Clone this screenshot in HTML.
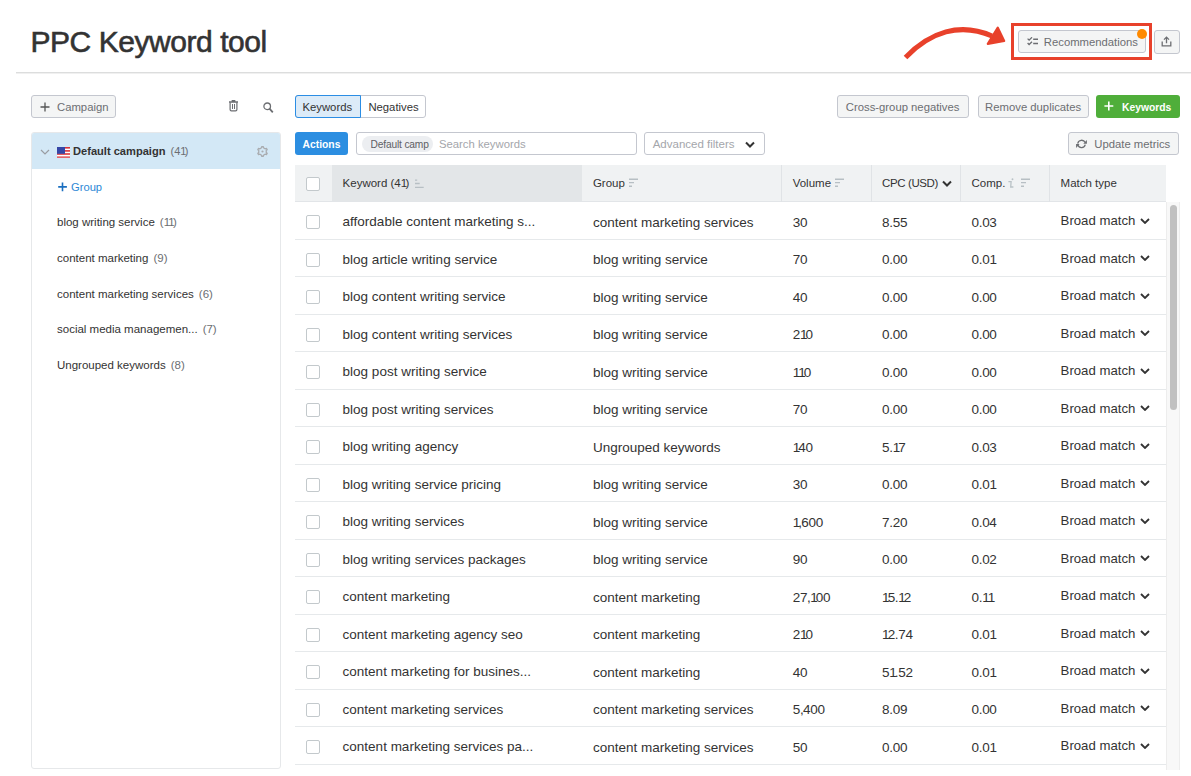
<!DOCTYPE html>
<html><head><meta charset="utf-8">
<style>
*{box-sizing:border-box;margin:0;padding:0}
html,body{width:1191px;height:776px;overflow:hidden;background:#fff}
body{position:relative;font-family:"Liberation Sans",sans-serif;color:#333}
.a{position:absolute}
.title{left:30.5px;top:24.7px;font-size:30px;line-height:34px;letter-spacing:-0.45px;-webkit-text-stroke:0.6px #333;color:#333;white-space:nowrap}
.hr{left:16px;top:72px;width:1175px;height:2px;border-top:1px solid #dcdddd;background:#f0f0f0}
.btn{position:absolute;border:1px solid #c4c7cf;border-radius:3px;background:#f4f5f5;color:#6c6e72;font-size:11.3px;display:flex;align-items:center;white-space:nowrap;padding-top:2px}
.panel{left:31px;top:132px;width:250px;height:637px;border:1px solid #e6e8ea;border-radius:3px;overflow:hidden}
.phead{position:absolute;left:0;top:0;width:100%;height:36px;background:#d3e8f6}
.gi{position:absolute;left:25px;font-size:11.5px;color:#333;white-space:nowrap;line-height:14px}
.gi span{color:#6c6e72;margin-left:5px}
.seg{left:295px;top:95px;width:131px;height:23px;border:1px solid #c4c7cf;border-radius:3px;font-size:11.3px;color:#333}
.seg .k{position:absolute;left:-1px;top:-1px;width:66px;height:23px;border:1px solid #2b8de4;border-radius:3px 0 0 3px;background:#dcebf8;display:flex;align-items:center;padding-left:6.5px}
.seg .n{position:absolute;left:65px;top:0;width:65px;height:21px;display:flex;align-items:center;justify-content:center}
.actions{left:295px;top:132.3px;width:53px;height:23px;background:#2c8ee1;border-radius:3px;color:#fff;font-weight:bold;font-size:10.3px;display:flex;align-items:center;justify-content:center;padding-top:2px}
.search{left:356px;top:132.3px;width:281px;height:23px;border:1px solid #c4c7cf;border-radius:3px;background:#fff}
.chip{position:absolute;left:5px;top:3px;width:71px;height:16px;border-radius:8px;background:#eceef1;font-size:10.2px;letter-spacing:-0.15px;color:#5e6064;line-height:17px;padding-left:8.5px;overflow:hidden;white-space:nowrap}
.chip span{display:inline-block;width:58px;overflow:hidden;vertical-align:top}
.ph{position:absolute;left:82px;top:1px;height:21px;line-height:21px;font-size:11.3px;color:#a4a6ab;white-space:nowrap}
.adv{left:644.4px;top:132.3px;width:120.5px;height:23px;border:1px solid #c4c7cf;border-radius:3px;background:#fff;font-size:11.5px;color:#a4a6ab}
.green{left:1096px;top:94.8px;width:83.5px;height:22.9px;background:#4fae3a;border-radius:3px;color:#fff;font-weight:bold;font-size:10.3px}
.tbl{left:295px;top:164.5px;width:871px;height:605px;overflow:hidden}
.thead{position:absolute;left:0;top:0;width:871px;height:37px}
.hbg{position:absolute;top:0;height:37px;background:#f0f2f3;border-bottom:1px solid #e2e5e8}
.hbg2{position:absolute;top:0;height:37px;background:#e3e6e8;border-bottom:1px solid #e2e5e8}
.vd{position:absolute;top:0;width:1px;height:37px;background:#e0e3e6}
.thead .c{font-size:11.5px;height:37px;color:#333;padding-top:0}
.c{position:absolute;top:0;height:37.5px;display:flex;align-items:center;padding-left:11px;padding-top:2px;white-space:nowrap;overflow:hidden}
.row{position:absolute;left:0;width:871px;height:37.5px;border-bottom:1px solid #e6e9eb;font-size:13.5px;color:#333}
.rows{position:absolute;left:0;top:37.5px;width:871px}
.n1{font-style:normal;margin-right:-1.7px}
.cm{font-style:normal;margin-right:-0.4px}
.cb{display:inline-block;width:14px;height:14px;border:1px solid #c3c9cc;border-radius:2px;background:#fff}
.si{margin-left:4px}
.hc{margin-left:4px}
.ii{font-family:"Liberation Serif",serif;font-style:italic;color:#b9bcc2;font-size:13px;margin-left:1px;margin-right:-1px}
.bm{display:flex;align-items:center;font-size:13.2px;position:relative;top:-1px}
.bm svg{margin-left:5px}
.sbtrack{left:1166.3px;top:202px;width:13.5px;height:568px;background:#f8f8f8;border-left:1px solid #ededed;border-right:1px solid #ededed}
.sbthumb{left:1170px;top:205px;width:7px;height:205px;background:#c1c1c1;border-radius:3.5px}
</style></head><body>

<div class="a title">PPC Keyword tool</div>
<div class="a hr"></div>

<!-- annotation arrow -->
<svg class="a" style="left:0;top:0" width="1191" height="80" viewBox="0 0 1191 80">
  <path d="M905.5 57.5 C 930 32, 960 22, 992 36" fill="none" stroke="#e8412b" stroke-width="5"/>
  <path d="M997.8 27.6 L1004.2 41 L987.8 43.8 Z" fill="#e8412b" stroke="#e8412b" stroke-width="2.2" stroke-linejoin="round"/>
</svg>
<div class="a" style="left:1011px;top:23px;width:140.5px;height:37.3px;border:3.5px solid #e8412b"></div>

<div class="btn" style="left:1018.3px;top:30.3px;width:127.5px;height:23.2px;padding-left:7.5px;padding-top:1px">
  <svg width="12" height="10" viewBox="0 0 12 10"><path d="M0.6 1.6L2.1 3.1L5 0.3M0.6 6L2.1 7.5L5 4.7" fill="none" stroke="#6c6e72" stroke-width="1.3"/><path d="M6.2 2.3H11M6.2 6.6H11" stroke="#6c6e72" stroke-width="1.5"/></svg>
  <span style="margin-left:5px">Recommendations</span>
</div>
<div class="a" style="left:1137px;top:29px;width:10px;height:10px;border-radius:50%;background:#ff8a00"></div>
<div class="btn" style="left:1153.5px;top:30.4px;width:26px;height:23.2px;justify-content:center;padding-top:0">
  <svg width="11" height="11" viewBox="0 0 11 11"><path d="M5.5 7.2V1.3M3 3.6L5.5 1.1L8 3.6" fill="none" stroke="#6c6e72" stroke-width="1.3"/><path d="M1.2 5.6V9.9H9.8V5.6" fill="none" stroke="#6c6e72" stroke-width="1.3"/></svg>
</div>

<!-- sidebar -->
<div class="btn" style="left:31px;top:95px;width:85px;height:22.5px;padding-left:8px">
  <svg width="10" height="10" viewBox="0 0 10 10"><path d="M5 0.5V9.5M0.5 5H9.5" stroke="#555" stroke-width="1.3"/></svg>
  <span style="margin-left:7px">Campaign</span>
</div>
<svg class="a" style="left:228px;top:99.4px" width="11" height="13" viewBox="0 0 11 13"><path d="M1 3H10M4.3 3V1.6H6.7V3" fill="none" stroke="#6c6e72" stroke-width="1.3"/><path d="M2.1 3.2V10.6Q2.1 11.9 3.4 11.9H7.6Q8.9 11.9 8.9 10.6V3.2" fill="none" stroke="#6c6e72" stroke-width="1.2"/><path d="M4.5 5V10M6.5 5V10" stroke="#6c6e72" stroke-width="1"/></svg>
<svg class="a" style="left:263px;top:101.7px" width="11" height="12" viewBox="0 0 11 12"><circle cx="4.2" cy="4.3" r="3.3" fill="none" stroke="#6c6e72" stroke-width="1.3"/><path d="M6.5 6.7L9.8 10.3" stroke="#6c6e72" stroke-width="1.8"/></svg>

<div class="a panel">
  <div class="phead"></div>
  <svg class="a" style="left:8px;top:16px" width="10" height="6" viewBox="0 0 10 6"><path d="M1 1L5 5L9 1" fill="none" stroke="#9a9da3" stroke-width="1.2"/></svg>
  <svg class="a" style="left:25px;top:13.5px" width="13" height="11" viewBox="0 0 13 11">
    <rect width="13" height="11" fill="#fff"/>
    <rect y="0" width="13" height="1.6" fill="#d8333a"/><rect y="3.1" width="13" height="1.6" fill="#d8333a"/><rect y="6.2" width="13" height="1.6" fill="#d8333a"/><rect y="9.3" width="13" height="1.7" fill="#d8333a" opacity="0.75"/>
    <rect width="8" height="6.8" fill="#3446a6"/>
  </svg>
  <div class="a" style="left:41px;top:11px;font-size:11.1px;line-height:14px;white-space:nowrap"><b>Default campaign</b><span style="color:#6c6e72;margin-left:5px">(4<i class="n1">1</i>)</span></div>
  <svg class="a" style="left:225px;top:13px" width="11" height="11" viewBox="0 0 11 11"><path d="M4.59 1.71 L4.77 0.55 L6.23 0.55 L6.41 1.71 L8.33 2.82 L9.42 2.39 L10.15 3.66 L9.24 4.39 L9.24 6.61 L10.15 7.34 L9.42 8.61 L8.33 8.18 L6.41 9.29 L6.23 10.45 L4.77 10.45 L4.59 9.29 L2.67 8.18 L1.58 8.61 L0.85 7.34 L1.76 6.61 L1.76 4.39 L0.85 3.66 L1.58 2.39 L2.67 2.82Z" fill="none" stroke="#a9acb0" stroke-width="1.3" stroke-linejoin="round"/><circle cx="5.5" cy="5.5" r="1.1" fill="#a9acb0"/></svg>
  <div class="gi" style="top:47px;color:#1c74c6"><svg width="10" height="10" viewBox="0 0 10 10" style="vertical-align:-1px;margin-left:1px"><path d="M4.5 0.5V9.3M0.2 4.9H8.9" stroke="#1a6fc0" stroke-width="1.6"/></svg><span style="color:#2d88d6;margin-left:3px;font-size:11.2px">Group</span></div>
  <div class="gi" style="top:82px">blog writing service<span>(<i class="n1">1</i><i class="n1">1</i>)</span></div>
  <div class="gi" style="top:118px">content marketing<span>(9)</span></div>
  <div class="gi" style="top:154px">content marketing services<span>(6)</span></div>
  <div class="gi" style="top:189px">social media managemen...<span>(7)</span></div>
  <div class="gi" style="top:225px">Ungrouped keywords<span>(8)</span></div>
</div>

<!-- main toolbar -->
<div class="a seg"><div class="k">Keywords</div><div class="n">Negatives</div></div>
<div class="btn" style="left:837.3px;top:95px;width:132px;height:22.7px;padding-left:7.5px;padding-top:1px">Cross-group negatives</div>
<div class="btn" style="left:977.6px;top:95px;width:111px;height:22.7px;padding-left:6.5px;padding-top:1px">Remove duplicates</div>
<div class="a btn green" style="border:none;justify-content:flex-start;padding-left:8px">
  <svg width="10" height="10" viewBox="0 0 10 10" style="margin-top:-2px"><path d="M4.8 0.5V9.5M0.4 5H9.3" stroke="#fff" stroke-width="1.6"/></svg>
  <span style="margin-left:8px">Keywords</span>
</div>

<div class="a actions">Actions</div>
<div class="a search"><div class="chip"><span>Default campaign</span></div><div class="ph">Search keywords</div></div>
<div class="a adv" style="display:flex;align-items:center;padding-left:7.3px">Advanced filters
  <svg style="position:absolute;left:100px;top:8px" width="10" height="7" viewBox="0 0 10 7"><path d="M1 1.5L5 5.5L9 1.5" fill="none" stroke="#333" stroke-width="2"/></svg>
</div>
<div class="btn" style="left:1068.3px;top:132.2px;width:111.2px;height:23.3px;padding-left:7px;padding-top:1px">
  <svg width="11" height="10" viewBox="0 0 11 10" style="margin-top:-1px"><path d="M1.73 4.6A3.9 3.9 0 0 1 9.16 3.6M9.27 5.6A3.9 3.9 0 0 1 1.84 6.1" fill="none" stroke="#6c6e72" stroke-width="1.25"/><path d="M10.9 0.9V4.7H7.3ZM0.1 9V5.1H3.6Z" fill="#6c6e72"/></svg>
  <span style="margin-left:7px">Update metrics</span>
</div>

<!-- table -->
<div class="a tbl">
  <div class="thead"><div class="hbg" style="left:0;width:871.0px"></div><div class="hbg2" style="left:36.6px;width:250.3px"></div><div class="vd" style="left:486.2px"></div><div class="vd" style="left:575.6px"></div><div class="vd" style="left:665.0px"></div><div class="vd" style="left:754.1px"></div><div class="c" style="left:0.0px;width:36.6px;justify-content:center;padding:0;padding-top:1.5px"><span class="cb"></span></div><div class="c" style="left:36.6px;width:250.3px;">Keyword (4<i class="n1">1</i>)<svg class="si" style="margin-left:5.5px;margin-top:1px" width="9" height="10" viewBox="0 0 9 10"><path d="M0 1.1H2.2M0 4.5H4.7M0 8.3H8.7" stroke="#b7bfc4" stroke-width="1.3" fill="none"/></svg></div><div class="c" style="left:286.9px;width:199.8px;">Group<svg class="si" width="9" height="10" viewBox="0 0 9 10"><path d="M0 1.2H9M0 4.6H5M0 8.3H3" stroke="#b7bfc4" stroke-width="1.4" fill="none"/></svg></div><div class="c" style="left:486.7px;width:89.4px;">Volume<svg class="si" width="9" height="10" viewBox="0 0 9 10"><path d="M0 1.2H9M0 4.6H5M0 8.3H3" stroke="#b7bfc4" stroke-width="1.4" fill="none"/></svg></div><div class="c" style="left:576.1px;width:89.4px;"><span style="letter-spacing:-0.4px">CPC (USD)</span> <svg class="hc" width="10" height="7" viewBox="0 0 10 7"><path d="M1 1.5L5 5.5L9 1.5" fill="none" stroke="#333" stroke-width="2"/></svg></div><div class="c" style="left:665.5px;width:89.1px;">Comp.<svg style="margin-left:3px" width="6" height="10" viewBox="0 0 6 10"><circle cx="4.5" cy="1.2" r="0.95" fill="#b9c2c6"/><path d="M0.4 3.7H3.1L2.7 9H5.4" stroke="#b9c2c6" stroke-width="1.3" fill="none"/></svg><svg class="si" style="margin-left:7px" width="9" height="10" viewBox="0 0 9 10"><path d="M0 1.2H9M0 4.6H5M0 8.3H3" stroke="#b7bfc4" stroke-width="1.4" fill="none"/></svg></div><div class="c" style="left:754.6px;width:116.4px;">Match type</div></div>
  <div class="rows">
<div class="row" style="top:0.00px"><div class="c" style="left:0.0px;width:36.6px;justify-content:center;padding:0;padding-top:2.5px"><span class="cb"></span></div><div class="c" style="left:36.6px;width:250.3px;">affordable content marketing s...</div><div class="c" style="left:286.9px;width:199.8px;padding-top:3px">content marketing services</div><div class="c" style="left:486.7px;width:89.4px;letter-spacing:-0.3px;padding-top:3px">30</div><div class="c" style="left:576.1px;width:89.4px;letter-spacing:-0.3px;padding-top:3px">8.55</div><div class="c" style="left:665.5px;width:89.1px;letter-spacing:-0.3px;padding-top:3px">0.03</div><div class="c" style="left:754.6px;width:116.4px;"><span class="bm">Broad match <svg width="10" height="6" viewBox="0 0 10 6"><path d="M1 1L5 5L9 1" fill="none" stroke="#333" stroke-width="1.8"/></svg></span></div></div>
<div class="row" style="top:37.50px"><div class="c" style="left:0.0px;width:36.6px;justify-content:center;padding:0;padding-top:2.5px"><span class="cb"></span></div><div class="c" style="left:36.6px;width:250.3px;">blog article writing service</div><div class="c" style="left:286.9px;width:199.8px;padding-top:3px">blog writing service</div><div class="c" style="left:486.7px;width:89.4px;letter-spacing:-0.3px;padding-top:3px">70</div><div class="c" style="left:576.1px;width:89.4px;letter-spacing:-0.3px;padding-top:3px">0.00</div><div class="c" style="left:665.5px;width:89.1px;letter-spacing:-0.3px;padding-top:3px">0.0<i class="n1">1</i></div><div class="c" style="left:754.6px;width:116.4px;"><span class="bm">Broad match <svg width="10" height="6" viewBox="0 0 10 6"><path d="M1 1L5 5L9 1" fill="none" stroke="#333" stroke-width="1.8"/></svg></span></div></div>
<div class="row" style="top:75.00px"><div class="c" style="left:0.0px;width:36.6px;justify-content:center;padding:0;padding-top:2.5px"><span class="cb"></span></div><div class="c" style="left:36.6px;width:250.3px;">blog content writing service</div><div class="c" style="left:286.9px;width:199.8px;padding-top:3px">blog writing service</div><div class="c" style="left:486.7px;width:89.4px;letter-spacing:-0.3px;padding-top:3px">40</div><div class="c" style="left:576.1px;width:89.4px;letter-spacing:-0.3px;padding-top:3px">0.00</div><div class="c" style="left:665.5px;width:89.1px;letter-spacing:-0.3px;padding-top:3px">0.00</div><div class="c" style="left:754.6px;width:116.4px;"><span class="bm">Broad match <svg width="10" height="6" viewBox="0 0 10 6"><path d="M1 1L5 5L9 1" fill="none" stroke="#333" stroke-width="1.8"/></svg></span></div></div>
<div class="row" style="top:112.50px"><div class="c" style="left:0.0px;width:36.6px;justify-content:center;padding:0;padding-top:2.5px"><span class="cb"></span></div><div class="c" style="left:36.6px;width:250.3px;">blog content writing services</div><div class="c" style="left:286.9px;width:199.8px;padding-top:3px">blog writing service</div><div class="c" style="left:486.7px;width:89.4px;letter-spacing:-0.3px;padding-top:3px">2<i class="n1">1</i>0</div><div class="c" style="left:576.1px;width:89.4px;letter-spacing:-0.3px;padding-top:3px">0.00</div><div class="c" style="left:665.5px;width:89.1px;letter-spacing:-0.3px;padding-top:3px">0.00</div><div class="c" style="left:754.6px;width:116.4px;"><span class="bm">Broad match <svg width="10" height="6" viewBox="0 0 10 6"><path d="M1 1L5 5L9 1" fill="none" stroke="#333" stroke-width="1.8"/></svg></span></div></div>
<div class="row" style="top:150.00px"><div class="c" style="left:0.0px;width:36.6px;justify-content:center;padding:0;padding-top:2.5px"><span class="cb"></span></div><div class="c" style="left:36.6px;width:250.3px;">blog post writing service</div><div class="c" style="left:286.9px;width:199.8px;padding-top:3px">blog writing service</div><div class="c" style="left:486.7px;width:89.4px;letter-spacing:-0.3px;padding-top:3px"><i class="n1">1</i><i class="n1">1</i>0</div><div class="c" style="left:576.1px;width:89.4px;letter-spacing:-0.3px;padding-top:3px">0.00</div><div class="c" style="left:665.5px;width:89.1px;letter-spacing:-0.3px;padding-top:3px">0.00</div><div class="c" style="left:754.6px;width:116.4px;"><span class="bm">Broad match <svg width="10" height="6" viewBox="0 0 10 6"><path d="M1 1L5 5L9 1" fill="none" stroke="#333" stroke-width="1.8"/></svg></span></div></div>
<div class="row" style="top:187.50px"><div class="c" style="left:0.0px;width:36.6px;justify-content:center;padding:0;padding-top:2.5px"><span class="cb"></span></div><div class="c" style="left:36.6px;width:250.3px;">blog post writing services</div><div class="c" style="left:286.9px;width:199.8px;padding-top:3px">blog writing service</div><div class="c" style="left:486.7px;width:89.4px;letter-spacing:-0.3px;padding-top:3px">70</div><div class="c" style="left:576.1px;width:89.4px;letter-spacing:-0.3px;padding-top:3px">0.00</div><div class="c" style="left:665.5px;width:89.1px;letter-spacing:-0.3px;padding-top:3px">0.00</div><div class="c" style="left:754.6px;width:116.4px;"><span class="bm">Broad match <svg width="10" height="6" viewBox="0 0 10 6"><path d="M1 1L5 5L9 1" fill="none" stroke="#333" stroke-width="1.8"/></svg></span></div></div>
<div class="row" style="top:225.00px"><div class="c" style="left:0.0px;width:36.6px;justify-content:center;padding:0;padding-top:2.5px"><span class="cb"></span></div><div class="c" style="left:36.6px;width:250.3px;">blog writing agency</div><div class="c" style="left:286.9px;width:199.8px;padding-top:3px">Ungrouped keywords</div><div class="c" style="left:486.7px;width:89.4px;letter-spacing:-0.3px;padding-top:3px"><i class="n1">1</i>40</div><div class="c" style="left:576.1px;width:89.4px;letter-spacing:-0.3px;padding-top:3px">5.<i class="n1">1</i>7</div><div class="c" style="left:665.5px;width:89.1px;letter-spacing:-0.3px;padding-top:3px">0.03</div><div class="c" style="left:754.6px;width:116.4px;"><span class="bm">Broad match <svg width="10" height="6" viewBox="0 0 10 6"><path d="M1 1L5 5L9 1" fill="none" stroke="#333" stroke-width="1.8"/></svg></span></div></div>
<div class="row" style="top:262.50px"><div class="c" style="left:0.0px;width:36.6px;justify-content:center;padding:0;padding-top:2.5px"><span class="cb"></span></div><div class="c" style="left:36.6px;width:250.3px;">blog writing service pricing</div><div class="c" style="left:286.9px;width:199.8px;padding-top:3px">blog writing service</div><div class="c" style="left:486.7px;width:89.4px;letter-spacing:-0.3px;padding-top:3px">30</div><div class="c" style="left:576.1px;width:89.4px;letter-spacing:-0.3px;padding-top:3px">0.00</div><div class="c" style="left:665.5px;width:89.1px;letter-spacing:-0.3px;padding-top:3px">0.0<i class="n1">1</i></div><div class="c" style="left:754.6px;width:116.4px;"><span class="bm">Broad match <svg width="10" height="6" viewBox="0 0 10 6"><path d="M1 1L5 5L9 1" fill="none" stroke="#333" stroke-width="1.8"/></svg></span></div></div>
<div class="row" style="top:300.00px"><div class="c" style="left:0.0px;width:36.6px;justify-content:center;padding:0;padding-top:2.5px"><span class="cb"></span></div><div class="c" style="left:36.6px;width:250.3px;">blog writing services</div><div class="c" style="left:286.9px;width:199.8px;padding-top:3px">blog writing service</div><div class="c" style="left:486.7px;width:89.4px;letter-spacing:-0.3px;padding-top:3px"><i class="n1">1</i><i class="cm">,</i>600</div><div class="c" style="left:576.1px;width:89.4px;letter-spacing:-0.3px;padding-top:3px">7.20</div><div class="c" style="left:665.5px;width:89.1px;letter-spacing:-0.3px;padding-top:3px">0.04</div><div class="c" style="left:754.6px;width:116.4px;"><span class="bm">Broad match <svg width="10" height="6" viewBox="0 0 10 6"><path d="M1 1L5 5L9 1" fill="none" stroke="#333" stroke-width="1.8"/></svg></span></div></div>
<div class="row" style="top:337.50px"><div class="c" style="left:0.0px;width:36.6px;justify-content:center;padding:0;padding-top:2.5px"><span class="cb"></span></div><div class="c" style="left:36.6px;width:250.3px;">blog writing services packages</div><div class="c" style="left:286.9px;width:199.8px;padding-top:3px">blog writing service</div><div class="c" style="left:486.7px;width:89.4px;letter-spacing:-0.3px;padding-top:3px">90</div><div class="c" style="left:576.1px;width:89.4px;letter-spacing:-0.3px;padding-top:3px">0.00</div><div class="c" style="left:665.5px;width:89.1px;letter-spacing:-0.3px;padding-top:3px">0.02</div><div class="c" style="left:754.6px;width:116.4px;"><span class="bm">Broad match <svg width="10" height="6" viewBox="0 0 10 6"><path d="M1 1L5 5L9 1" fill="none" stroke="#333" stroke-width="1.8"/></svg></span></div></div>
<div class="row" style="top:375.00px"><div class="c" style="left:0.0px;width:36.6px;justify-content:center;padding:0;padding-top:2.5px"><span class="cb"></span></div><div class="c" style="left:36.6px;width:250.3px;">content marketing</div><div class="c" style="left:286.9px;width:199.8px;padding-top:3px">content marketing</div><div class="c" style="left:486.7px;width:89.4px;letter-spacing:-0.3px;padding-top:3px">27<i class="cm">,</i><i class="n1">1</i>00</div><div class="c" style="left:576.1px;width:89.4px;letter-spacing:-0.3px;padding-top:3px"><i class="n1">1</i>5.<i class="n1">1</i>2</div><div class="c" style="left:665.5px;width:89.1px;letter-spacing:-0.3px;padding-top:3px">0.<i class="n1">1</i><i class="n1">1</i></div><div class="c" style="left:754.6px;width:116.4px;"><span class="bm">Broad match <svg width="10" height="6" viewBox="0 0 10 6"><path d="M1 1L5 5L9 1" fill="none" stroke="#333" stroke-width="1.8"/></svg></span></div></div>
<div class="row" style="top:412.50px"><div class="c" style="left:0.0px;width:36.6px;justify-content:center;padding:0;padding-top:2.5px"><span class="cb"></span></div><div class="c" style="left:36.6px;width:250.3px;">content marketing agency seo</div><div class="c" style="left:286.9px;width:199.8px;padding-top:3px">content marketing</div><div class="c" style="left:486.7px;width:89.4px;letter-spacing:-0.3px;padding-top:3px">2<i class="n1">1</i>0</div><div class="c" style="left:576.1px;width:89.4px;letter-spacing:-0.3px;padding-top:3px"><i class="n1">1</i>2.74</div><div class="c" style="left:665.5px;width:89.1px;letter-spacing:-0.3px;padding-top:3px">0.0<i class="n1">1</i></div><div class="c" style="left:754.6px;width:116.4px;"><span class="bm">Broad match <svg width="10" height="6" viewBox="0 0 10 6"><path d="M1 1L5 5L9 1" fill="none" stroke="#333" stroke-width="1.8"/></svg></span></div></div>
<div class="row" style="top:450.00px"><div class="c" style="left:0.0px;width:36.6px;justify-content:center;padding:0;padding-top:2.5px"><span class="cb"></span></div><div class="c" style="left:36.6px;width:250.3px;">content marketing for busines...</div><div class="c" style="left:286.9px;width:199.8px;padding-top:3px">content marketing</div><div class="c" style="left:486.7px;width:89.4px;letter-spacing:-0.3px;padding-top:3px">40</div><div class="c" style="left:576.1px;width:89.4px;letter-spacing:-0.3px;padding-top:3px">5<i class="n1">1</i>.52</div><div class="c" style="left:665.5px;width:89.1px;letter-spacing:-0.3px;padding-top:3px">0.0<i class="n1">1</i></div><div class="c" style="left:754.6px;width:116.4px;"><span class="bm">Broad match <svg width="10" height="6" viewBox="0 0 10 6"><path d="M1 1L5 5L9 1" fill="none" stroke="#333" stroke-width="1.8"/></svg></span></div></div>
<div class="row" style="top:487.50px"><div class="c" style="left:0.0px;width:36.6px;justify-content:center;padding:0;padding-top:2.5px"><span class="cb"></span></div><div class="c" style="left:36.6px;width:250.3px;">content marketing services</div><div class="c" style="left:286.9px;width:199.8px;padding-top:3px">content marketing services</div><div class="c" style="left:486.7px;width:89.4px;letter-spacing:-0.3px;padding-top:3px">5<i class="cm">,</i>400</div><div class="c" style="left:576.1px;width:89.4px;letter-spacing:-0.3px;padding-top:3px">8.09</div><div class="c" style="left:665.5px;width:89.1px;letter-spacing:-0.3px;padding-top:3px">0.00</div><div class="c" style="left:754.6px;width:116.4px;"><span class="bm">Broad match <svg width="10" height="6" viewBox="0 0 10 6"><path d="M1 1L5 5L9 1" fill="none" stroke="#333" stroke-width="1.8"/></svg></span></div></div>
<div class="row" style="top:525.00px"><div class="c" style="left:0.0px;width:36.6px;justify-content:center;padding:0;padding-top:2.5px"><span class="cb"></span></div><div class="c" style="left:36.6px;width:250.3px;">content marketing services pa...</div><div class="c" style="left:286.9px;width:199.8px;padding-top:3px">content marketing services</div><div class="c" style="left:486.7px;width:89.4px;letter-spacing:-0.3px;padding-top:3px">50</div><div class="c" style="left:576.1px;width:89.4px;letter-spacing:-0.3px;padding-top:3px">0.00</div><div class="c" style="left:665.5px;width:89.1px;letter-spacing:-0.3px;padding-top:3px">0.0<i class="n1">1</i></div><div class="c" style="left:754.6px;width:116.4px;"><span class="bm">Broad match <svg width="10" height="6" viewBox="0 0 10 6"><path d="M1 1L5 5L9 1" fill="none" stroke="#333" stroke-width="1.8"/></svg></span></div></div>
  </div>
</div>
<div class="a sbtrack"></div>
<div class="a sbthumb"></div>

</body></html>
